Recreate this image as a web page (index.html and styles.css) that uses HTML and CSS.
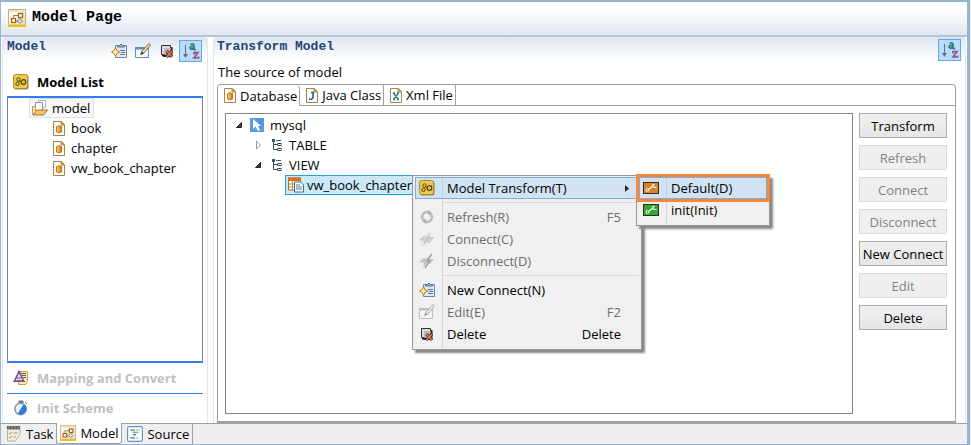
FILE: index.html
```
<!DOCTYPE html>
<html lang="en">
<head>
<meta charset="utf-8">
<title>Model Page</title>
<link rel="stylesheet" href="styles.css">
</head>
<body>
<svg class="sprite" aria-hidden="true">
  <defs>
    <linearGradient id="gold" x1="0" y1="0" x2="1" y2="0"><stop offset="0" stop-color="#ffd98a"/><stop offset=".5" stop-color="#f6a53a"/><stop offset="1" stop-color="#c9660c"/></linearGradient>
    <linearGradient id="cream" x1="0" y1="0" x2="1" y2="1"><stop offset="0" stop-color="#fff"/><stop offset=".5" stop-color="#fdf3d4"/><stop offset="1" stop-color="#f3d99c"/></linearGradient>
    <symbol id="i-model" viewBox="0 0 18 18"><path d="M.5 17V.5h17V17" fill="url(#cream)" stroke="#c3ac86"/><path d="M1 1h15v2H1z" fill="#f3dfba"/><rect y="15.500" width="18" height="2.500" fill="#f2b929"/><path d="M5.500 8.500v-2h5M7 12h3" stroke="#8d7b62" fill="none"/><rect x="10.500" y="4.500" width="4" height="4" fill="#fff" stroke="#a4611a" stroke-width="1.300"/><rect x="3.500" y="9.500" width="4" height="4" fill="#fff" stroke="#a4611a" stroke-width="1.300"/><path d="M12 9.500l2.500 2.500-2.500 2.500L9.500 12z" fill="#dcecfa" stroke="#4c82b8"/></symbol>
    <symbol id="i-new" viewBox="0 0 16 16"><path d="M4.500 2.500h11v12h-11z" fill="#dfe9f6" stroke="#6a86b0"/><path d="M6.500 4V2.500h2q1.500-3 3 0h2V4z" fill="#a9bf9a" stroke="#56749c"/><path d="M9 7.500h5M10 9.500h4M9 11.500h5" stroke="#5c7baa"/><path d="M4.500 4.500l1.300 3 3 1.500-3 1.500-1.300 3-1.300-3L.5 9l2.700-1.500z" fill="#ffe07a" stroke="#b8791d"/><path d="M2 9h5M4.500 6.500v5" stroke="#fff4bd"/></symbol>
    <symbol id="i-edit" viewBox="0 0 16 16"><path d="M.5 4.500h13v10H.5z" fill="#f4faff" stroke="#6a8fbd"/><path d="M0 4h14v2.500H0z" fill="#5f8cc5"/><path d="M6 11l1-3L14 .500l1.500 1.500L9 10z" fill="#efd9a0" stroke="#7d6b46"/><path d="M5 12l1.500-3.500L9 10.500z" fill="#443d35"/></symbol>
    <symbol id="i-delete" viewBox="0 0 16 16"><path d="M2.500 2.500h9v2h1.500v9H4.500v-2h-2z" fill="#bcb8be" stroke="#3a3034"/><path d="M3 3h8v2H5v6H3z" fill="#dddde1"/><path d="M3 12.500h6M12.500 4v4" stroke="#2a1d1d" stroke-width="1.500"/><path d="M7.500 8l5.500 6M13 8l-5.500 6" stroke="#4a1d10" stroke-width="3"/><path d="M7.500 8l5.500 6M13 8l-5.500 6" stroke="#e07f58" stroke-width="1.500"/></symbol>
    <symbol id="i-sort" viewBox="0 0 18 18"><path d="M3.500 3v11" stroke="#666d80"/><path d="M1 12h5l-2.500 4z" fill="#666d80"/><path d="M8.500 2.500q3.500-1.500 3.500 1V7q0 1 2 .5M12 4.500q-4-.5-4 1.500 1 2.500 4 0" fill="none" stroke="#258278" stroke-width="1.800"/><path d="M12 12.500v-2h4L12 16h4.500v-1.500" fill="none" stroke="#965087" stroke-width="1.700"/></symbol>
    <symbol id="i-gear" viewBox="0 0 16 16"><rect x="1" y="1" width="14.500" height="14.500" rx="2" fill="#8e8358"/><rect x=".5" y=".5" width="14" height="14" rx="2" fill="#edca48" stroke="#a98c35"/><circle cx="5.500" cy="5.500" r="1.700" fill="none" stroke="#534018"/><circle cx="4.500" cy="9.800" r="1.700" fill="none" stroke="#534018"/><circle cx="10.500" cy="8" r="2.300" fill="none" stroke="#534018" stroke-width="1.200"/><path d="M6.500 7l1.500 1" stroke="#534018"/></symbol>
    <symbol id="i-folder" viewBox="0 0 16 16"><path d="M6.500.5h7v7h-7z" fill="#fff" stroke="#aab7ca"/><path d="M3.500 2.500h7v8h-7z" fill="#f8fbff" stroke="#8797b1"/><path d="M.5 14.500v-8h3v4h8v4z" fill="#f7dfa6" stroke="#c49b54"/><path d="M1 15l4-5h10.500l-4 5z" fill="#f2c463" stroke="#a8742a"/></symbol>
    <symbol id="i-page" viewBox="0 0 12 15"><path d="M.5.5h8l3 3v11H.5z" fill="#fafcff" stroke="#a68546"/><path d="M8 1v3h3z" fill="#edc273" stroke="#b78b41"/></symbol>
    <symbol id="i-db" viewBox="0 0 12 15"><use href="#i-page" width="12" height="15"/><path d="M3.500 5.500q2.500-1.500 5 0v5.500q-2.500 1.500-5 0z" fill="url(#gold)" stroke="#c5761b"/></symbol>
    <symbol id="i-java" viewBox="0 0 12 15"><use href="#i-page" width="12" height="15"/><path d="M5 4.500h3M7 4v5q-.5 3-4 2" fill="none" stroke="#255ca3" stroke-width="1.600"/></symbol>
    <symbol id="i-xml" viewBox="0 0 12 15"><use href="#i-page" width="12" height="15"/><path d="M3.500 5l5 6.500M8.500 5l-5 6.500M3 5h2m2 0h2M3 11.500h2m2 0h2" stroke="#257e83" stroke-width="1.300"/></symbol>
    <symbol id="i-map" viewBox="0 0 16 16"><path d="M5.500 1.500h9v10l-2 3h-7z" fill="#ffedab" stroke="#c49b4d"/><path d="M8 3.500h5M9 5.500h4M10 7.500h3" stroke="#4f5c79"/><path d="M6 1.500L1.500 11h9z" fill="#e5dded" stroke="#75528d" stroke-width="1.600"/><path d="M0 11.500h12M4 8h4" stroke="#75528d"/></symbol>
    <symbol id="i-clock" viewBox="0 0 16 16"><path d="M6 1h4v2H6zM12 2l2 2" fill="#6b7580" stroke="#6b7580"/><circle cx="7.500" cy="9" r="5.700" fill="#e8f3fb" stroke="#8b98a5" stroke-width="1.600"/><path d="M7.500 9L11 4a5 5 0 0 1-6 9.500z" fill="#2d78e5"/></symbol>
    <symbol id="i-cursor" viewBox="0 0 14 14"><rect width="14" height="14" fill="#549ce4"/><path d="M3 1v10l2.500-2.500L8 13l2-1-2-4h3z" fill="#fff"/><path d="M8 2h1m2 0h1m-2 2h1m-1 5h1" stroke="#2c6fb5"/></symbol>
    <symbol id="i-tree" viewBox="0 0 10 12"><path d="M1.500 1v9.500h5M2 5.500h4" fill="none" stroke="#2b4e69"/><path d="M4 1.500h5" stroke="#555"/><rect x="0" y="0" width="3" height="3" fill="#315b76"/><rect x="6" y="4.500" width="3" height="2" fill="#fff" stroke="#26384e"/><rect x="6" y="9.500" width="3" height="2" fill="#fff" stroke="#26384e"/></symbol>
    <symbol id="i-table" viewBox="0 0 16 15"><path d="M.5.5h12v12H.5z" fill="#fff7e9" stroke="#a66e34"/><path d="M0 0h13v3.500H0z" fill="#d66f21"/><path d="M4.500 3v10M1 6.500h11M1 9.500h11" stroke="#bd9163"/><path d="M6.500 4.500h6l3 3v7h-9z" fill="#f8fcff" stroke="#4f6b88"/><path d="M8 7.500h4M8 9.500h6M8 11.500h6" stroke="#4e7fa8"/></symbol>
    <symbol id="i-refresh" viewBox="0 0 16 16"><path d="M5 12q-4-4 0-8 3-2 6 0M11 4q4 4 0 8-3 2-6 0" fill="none" stroke="#bdbdbd" stroke-width="2.500"/><path d="M9 1l4 3-4 2zM7 15l-4-3 4-2z" fill="#b0b0b0"/></symbol>
    <symbol id="i-plug" viewBox="0 0 16 16"><path d="M0 9l5-4 2 1 5-5-2 5h5l-4 6-3-1-4 4 1-5z" fill="#c8c8c8"/><path d="M1 11h4M9 9h6M6 4v6" stroke="#ddd"/></symbol>
    <symbol id="i-unplug" viewBox="0 0 16 16"><path d="M0 9l5-4 2 1 5-5-2 5h5l-4 5-3-1-4 6 1-6z" fill="#c4c4c4"/><path d="M13 1l-5 7h3l-5 7" fill="none" stroke="#a0a0a0" stroke-width="1.300"/></symbol>
    <symbol id="i-key" viewBox="0 0 16 12"><rect x=".5" y=".5" width="15" height="11" fill="currentColor" stroke="#382b1d"/><circle cx="4.500" cy="8" r="1.400" fill="none" stroke="#fff"/><path d="M6 7l4-3 1 1.500h2.500M10 4V2.500h1.500" fill="none" stroke="#fff" stroke-width="1.100"/></symbol>
    <symbol id="i-task" viewBox="0 0 16 16"><path d="M1.500 3.500h13l-1 6-4 5.500h-8z" fill="#f3e9dd" stroke="#b5aea6"/><path d="M1 0h13v3H1z" fill="#55575c"/><path d="M3 .500v2m3-2v2m3-2v2m3-2v2" stroke="#b9bec5"/><path d="M3 7l1 1 2-2m1.500 1h4M3 11l1 1 2-2m1.500 1h2" stroke="#b08e68" fill="none"/></symbol>
    <symbol id="i-source" viewBox="0 0 14 14"><rect x=".5" y=".5" width="13" height="13" rx="1.500" fill="#fafdff" stroke="#6995bc"/><path d="M3 3.500h4M3 10.500h4" stroke="#275d7b"/><path d="M5 5.500h5M5 7.500h3" stroke="#319273"/><path d="M8 3.500h3M8 10.500h2" stroke="#d59c44"/></symbol>
  </defs>
</svg>
<div class="window">
  <header class="title-bar">
    <svg class="title-icon"><use href="#i-model"/></svg>
    <h1>Model Page</h1>
  </header>
  <div class="workspace">
    <aside class="panel sidebar">
      <div class="panel-head">
        <h2>Model</h2>
        <div class="toolbar">
          <button aria-label="New"><svg class="icon"><use href="#i-new"/></svg></button>
          <button aria-label="Edit"><svg class="icon"><use href="#i-edit"/></svg></button>
          <button aria-label="Delete"><svg class="icon"><use href="#i-delete"/></svg></button>
          <button class="sort" aria-label="Sort"><svg class="sort-icon"><use href="#i-sort"/></svg></button>
        </div>
      </div>
      <button class="section current"><svg class="icon"><use href="#i-gear"/></svg>Model List</button>
      <ul class="model-tree">
        <li><span class="model-root"><svg class="icon"><use href="#i-folder"/></svg>model</span>
          <ul>
            <li><svg class="file-icon"><use href="#i-db"/></svg>book</li>
            <li><svg class="file-icon"><use href="#i-db"/></svg>chapter</li>
            <li><svg class="file-icon"><use href="#i-db"/></svg>vw_book_chapter</li>
          </ul>
        </li>
      </ul>
      <button class="section"><svg class="icon"><use href="#i-map"/></svg>Mapping and Convert</button>
      <button class="section"><svg class="icon"><use href="#i-clock"/></svg>Init Scheme</button>
    </aside>
    <main class="panel content">
      <div class="panel-head">
        <h2>Transform Model</h2>
        <button class="sort" aria-label="Sort"><svg class="sort-icon"><use href="#i-sort"/></svg></button>
      </div>
      <p class="caption">The source of model</p>
      <section class="folder">
        <div class="tabs" role="tablist">
          <button class="tab active" role="tab" aria-selected="true"><svg class="file-icon"><use href="#i-db"/></svg>Database</button>
          <button class="tab" role="tab"><svg class="file-icon"><use href="#i-java"/></svg>Java Class</button>
          <button class="tab" role="tab"><svg class="file-icon"><use href="#i-xml"/></svg>Xml File</button>
        </div>
        <div class="folder-body">
          <ul class="db-tree">
            <li class="row level-1"><svg class="arrow" viewBox="0 0 8 8"><path d="M6.500 1.500v5h-5z" fill="#444" stroke="#222"/></svg><svg class="cursor-icon"><use href="#i-cursor"/></svg>mysql</li>
            <li class="row level-2"><svg class="arrow" viewBox="0 0 8 8"><path d="M2.500 0l4 4-4 4z" fill="#fff" stroke="#999"/></svg><svg class="tree-icon"><use href="#i-tree"/></svg>TABLE</li>
            <li class="row level-2"><svg class="arrow" viewBox="0 0 8 8"><path d="M6.500 1.500v5h-5z" fill="#444" stroke="#222"/></svg><svg class="tree-icon"><use href="#i-tree"/></svg>VIEW</li>
            <li class="row level-3"><span class="selected"><svg class="icon"><use href="#i-table"/></svg>vw_book_chapter
              <span class="menu" role="menu">
                <button class="item hot" role="menuitem"><svg class="icon"><use href="#i-gear"/></svg><span>Model Transform(T)</span><svg class="more" viewBox="0 0 4 7"><path d="M0 0l4 3.500-4 3.500z" fill="#222"/></svg></button>
                <span class="separator"></span>
                <button class="item" role="menuitem" disabled><svg class="icon"><use href="#i-refresh"/></svg><span>Refresh(R)</span><kbd>F5</kbd></button>
                <button class="item" role="menuitem" disabled><svg class="icon"><use href="#i-plug"/></svg><span>Connect(C)</span></button>
                <button class="item" role="menuitem" disabled><svg class="icon"><use href="#i-unplug"/></svg><span>Disconnect(D)</span></button>
                <span class="separator"></span>
                <button class="item" role="menuitem"><svg class="icon"><use href="#i-new"/></svg><span>New Connect(N)</span></button>
                <button class="item" role="menuitem" disabled><svg class="icon gray"><use href="#i-edit"/></svg><span>Edit(E)</span><kbd>F2</kbd></button>
                <button class="item" role="menuitem"><svg class="icon"><use href="#i-delete"/></svg><span>Delete</span><kbd>Delete</kbd></button>
                <span class="menu submenu" role="menu">
                  <button class="item hot marked" role="menuitem"><svg class="key-icon orange"><use href="#i-key"/></svg><span>Default(D)</span></button>
                  <button class="item" role="menuitem"><svg class="key-icon green"><use href="#i-key"/></svg><span>init(Init)</span></button>
                </span>
              </span></span>
            </li>
          </ul>
          <div class="actions">
            <button>Transform</button>
            <button disabled>Refresh</button>
            <button disabled>Connect</button>
            <button disabled>Disconnect</button>
            <button>New Connect</button>
            <button disabled>Edit</button>
            <button>Delete</button>
          </div>
        </div>
      </section>
    </main>
  </div>
  <footer class="page-tabs" role="tablist">
    <button class="page-tab" role="tab"><svg class="icon"><use href="#i-task"/></svg>Task</button>
    <button class="page-tab active" role="tab" aria-selected="true"><svg class="icon"><use href="#i-model"/></svg>Model</button>
    <button class="page-tab" role="tab"><svg class="icon"><use href="#i-source"/></svg>Source</button>
  </footer>
</div>
</body>
</html>
```
FILE: styles.css
```
* { box-sizing: border-box; }
body { margin: 0; background: #efefef; color: #000; font: 13px/20px "Open Sans", "Noto Sans", sans-serif; }
button { font: inherit; color: inherit; margin: 0; padding: 0; border: 0; background: none; }
ul { list-style: none; margin: 0; padding: 0; }
h1, h2, p { margin: 0; }
svg { display: block; flex: none; }
.sprite { position: absolute; width: 0; height: 0; }
.icon { width: 16px; height: 16px; }
.file-icon { width: 12px; height: 15px; }
.gray { filter: grayscale(1); opacity: .45; }

.window { display: flex; flex-direction: column; height: 100vh; margin-right: 1px; border: solid #99b4d1; border-width: 2px 3px 1px 1px; background: #fff; }
.title-bar { display: flex; align-items: center; gap: 6px; height: 35px; padding: 0 7px 2px; background: linear-gradient(#fff 20%, #e1e7f1); border-bottom: 2px solid #b3c4da; }
.title-icon { width: 18px; height: 18px; }
h1 { font: bold 15px/20px "Liberation Mono", monospace; }
h2 { font: bold 13px/20px "Liberation Mono", monospace; color: #1d4676; }

.workspace { flex: 1; min-height: 0; display: flex; gap: 5px; padding: 0 1px; }
.panel { display: flex; flex-direction: column; min-width: 0; border: 1px solid #dfe6f0; border-width: 1px 1px 0; border-radius: 4px 4px 0 0; background: linear-gradient(#dfe6f1, #fff 22px); }
.sidebar { width: 206px; padding: 0 4px; flex: none; }
.content { flex: 1; padding: 0 3px; }
.panel-head { display: flex; justify-content: space-between; height: 25px; }
.panel-head h2 { line-height: 18px; }
.toolbar { display: flex; gap: 8px; align-items: center; }
.toolbar .sort { margin: 0 1px 0 -4px; }
.sort { display: grid; place-items: center; width: 23px; height: 22px; margin-top: 1px; border: 1px solid #62a9ec; background: #b9dcfb; }
.content .sort { margin-right: 1px; }
.sort-icon { width: 18px; height: 18px; }

.section { display: flex; align-items: center; gap: 8px; height: 30px; padding: 0 6px 1px; font-weight: bold; color: #bfbfbf; text-align: left; }
.section + .section { border-top: 1px solid #2f7cf6; }
.section.current { height: 33px; padding-top: 5px; color: #000; }
.model-tree { flex: 1; border: 1px solid #83838b; border-top: 2px solid #2f7cf6; border-bottom: 2px solid #2f7cf6; background: #fff; }
.model-tree > li { padding-left: 21px; }
.model-root { display: inline-flex; align-items: center; gap: 4px; height: 20px; padding: 0 3px 0 2px; border: 1px solid #dedede; background: #f7f7f7; vertical-align: top; }
.model-tree ul li { display: flex; align-items: center; gap: 6px; height: 20px; padding-left: 24px; }

.caption { height: 21px; padding-left: 1px; line-height: 18px; }
.folder { flex: 1; min-height: 0; display: flex; flex-direction: column; margin-right: 6px; border: 1px solid #a0a0a0; border-bottom-width: 2px; border-radius: 4px 4px 0 0; background: #fff; }
.tabs { display: flex; height: 21px; border-bottom: 1px solid #a0a0a0; }
.tab { display: flex; align-items: center; gap: 4px; padding: 0 2px 0 6px; border-right: 1px solid #a0a0a0; white-space: nowrap; }
.tab.active { margin-bottom: -1px; background: #fff; border-radius: 4px 4px 0 0; }
.folder-body { flex: 1; min-height: 0; display: flex; gap: 6px; padding: 7px 8px 7px 7px; }
.db-tree { flex: 1; border: 1px solid #83838b; background: #fff; }
.row { display: flex; align-items: center; height: 20px; }
.db-tree .row:first-child { margin-top: 1px; }
.level-1 { padding-left: 9px; }
.level-2 { padding-left: 28px; }
.level-3 { padding-left: 59px; }
.arrow { width: 8px; height: 8px; margin-right: 7px; }
.cursor-icon { width: 14px; height: 14px; margin-right: 6px; }
.tree-icon { width: 10px; height: 12px; margin: 0 7px 0 3px; }
.selected { position: relative; display: flex; align-items: center; gap: 3px; height: 20px; padding: 0 0 0 2px; border: 1px solid #26a0da; background: #cbe8f6; white-space: nowrap; }

.actions { width: 88px; display: flex; flex-direction: column; gap: 7px; }
.actions button { height: 25px; border: 1px solid #acacac; background: linear-gradient(#f0f0f0, #e5e5e5); white-space: nowrap; }
.actions button:disabled { color: #838383; border-color: #d9d9d9; background: #efefef; }

.menu { position: absolute; z-index: 2; top: -1px; left: 100%; width: 230px; display: flex; flex-direction: column; padding: 1px 2px 4px; border: 1px solid #979797; background: linear-gradient(90deg, transparent 29px, #d7d7d7 29px 30px, transparent 30px) #f0f0f0; box-shadow: 3px 3px 2px #888; }
.item { display: flex; align-items: center; height: 22px; padding: 0 17px 0 3px; border: 1px solid transparent; text-align: left; }
.item span { flex: 1; margin-left: 12px; }
.item:disabled { color: #6d6d6d; }
.item kbd { font: inherit; }
.item.hot { border-color: #78aee5; background: linear-gradient(90deg, transparent 26px, #b9cfe5 26px 27px, transparent 27px) #d1e2f2; }
.more { width: 4px; height: 7px; margin-right: -8px; }
.separator { height: 1px; margin: 3px 0 3px 28px; background: #d7d7d7; flex: none; }
.submenu { top: -1px; left: 223px; width: 134px; }
.submenu .item { padding-right: 3px; }
.key-icon { width: 16px; height: 12px; }
.orange { color: #d9822b; }
.green { color: #31a936; }
.marked { outline: 3px solid #fb8735; outline-offset: 0; }

.page-tabs { display: flex; height: 21px; border-top: 1px solid #a0a0a0; background: #efefef; }
.page-tab { display: flex; align-items: center; gap: 4px; padding: 0 3px 0 5px; border-right: 1px solid #a0a0a0; }
.page-tab.active { margin-top: -1px; padding-left: 3px; background: #fff; border-bottom: 1px solid #a0a0a0; border-radius: 0 0 4px 4px; }
```
